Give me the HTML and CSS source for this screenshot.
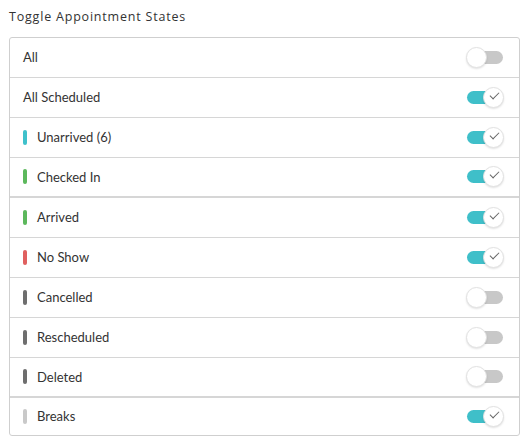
FILE: index.html
```html
<!DOCTYPE html>
<html lang="en">
<head>
  <meta charset="UTF-8">
  <meta name="viewport" content="width=device-width, initial-scale=1.0">
  <title>Toggle Appointment States</title>
  <link rel="stylesheet" href="styles.css">
</head>
<body>
  <div class="panel">
    <h2 class="panel-title">Toggle Appointment States</h2>

    <ul class="state-list">
      <li class="state-row">
        <span class="state-label">All</span>
        <span class="toggle"><span class="knob"></span></span>
      </li>
      <li class="state-row">
        <span class="state-label">All Scheduled</span>
        <span class="toggle on"><span class="knob"></span></span>
      </li>
      <li class="state-row">
        <span class="swatch teal"></span>
        <span class="state-label">Unarrived (6)</span>
        <span class="toggle on"><span class="knob"></span></span>
      </li>
      <li class="state-row group-end">
        <span class="swatch green"></span>
        <span class="state-label">Checked In</span>
        <span class="toggle on"><span class="knob"></span></span>
      </li>
      <li class="state-row">
        <span class="swatch green"></span>
        <span class="state-label">Arrived</span>
        <span class="toggle on"><span class="knob"></span></span>
      </li>
      <li class="state-row">
        <span class="swatch red"></span>
        <span class="state-label">No Show</span>
        <span class="toggle on"><span class="knob"></span></span>
      </li>
      <li class="state-row">
        <span class="swatch dark"></span>
        <span class="state-label">Cancelled</span>
        <span class="toggle"><span class="knob"></span></span>
      </li>
      <li class="state-row">
        <span class="swatch dark"></span>
        <span class="state-label">Rescheduled</span>
        <span class="toggle"><span class="knob"></span></span>
      </li>
      <li class="state-row group-end">
        <span class="swatch dark"></span>
        <span class="state-label">Deleted</span>
        <span class="toggle"><span class="knob"></span></span>
      </li>
      <li class="state-row">
        <span class="swatch light"></span>
        <span class="state-label">Breaks</span>
        <span class="toggle on"><span class="knob"></span></span>
      </li>
    </ul>
  </div>
</body>
</html>
```

FILE: styles.css
```css
/* Base */
* {
  margin: 0;
  padding: 0;
  box-sizing: border-box;
}

body {
  background-color: #fff;
  color: #333;
  font-family: Lato, "Open Sans", sans-serif;
}

/* Panel */
.panel {
  padding: 8px 11px 0 9px;
}

.panel-title {
  font-family: "Open Sans", Lato, sans-serif;
  font-size: 12.5px;
  font-weight: 400;
  letter-spacing: 0.8px;
  color: #333;
  line-height: 18px;
  margin-bottom: 11px;
}

/* List */
.state-list {
  list-style: none;
  border: 1px solid #cfcfcf;
  border-radius: 3px;
}

.state-row {
  display: flex;
  align-items: center;
  height: 40px;
  padding: 0 14px 1px 13px;
  border-bottom: 1px solid #d6d6d6;
}

.state-row:last-child {
  border-bottom: none;
  height: 37px;
}

.state-row.group-end {
  border-bottom: 2px solid #d6d6d6;
}

.state-label {
  flex: 1;
  font-size: 13px;
  color: #333;
}

/* Colour swatch */
.swatch {
  width: 4px;
  height: 15px;
  border-radius: 2px;
  margin-right: 10px;
}

.swatch.teal { background-color: #3fc1cb; }
.swatch.green { background-color: #5cb85c; }
.swatch.red { background-color: #e0605f; }
.swatch.dark { background-color: #6e6e6e; }
.swatch.light { background-color: #c9c9c9; }

/* Toggle switch */
.toggle {
  position: relative;
  width: 36px;
  height: 13px;
  border-radius: 7px;
  background-color: #c8c8c8;
  margin-right: 2px;
}

.toggle.on {
  background-color: #3fbfc9;
}

.knob {
  position: absolute;
  top: -4px;
  left: -1px;
  width: 21px;
  height: 21px;
  border-radius: 50%;
  background-color: #fff;
  border: 1px solid #e2e2e2;
  box-shadow: 0 1px 2px rgba(0, 0, 0, 0.12);
}

.toggle.on .knob {
  left: auto;
  right: -1px;
}

.toggle.on .knob::after {
  content: "";
  position: absolute;
  left: 6px;
  top: 4px;
  width: 8px;
  height: 4px;
  border-left: 1.5px solid #666;
  border-bottom: 1.5px solid #666;
  transform: rotate(-45deg);
}
```
